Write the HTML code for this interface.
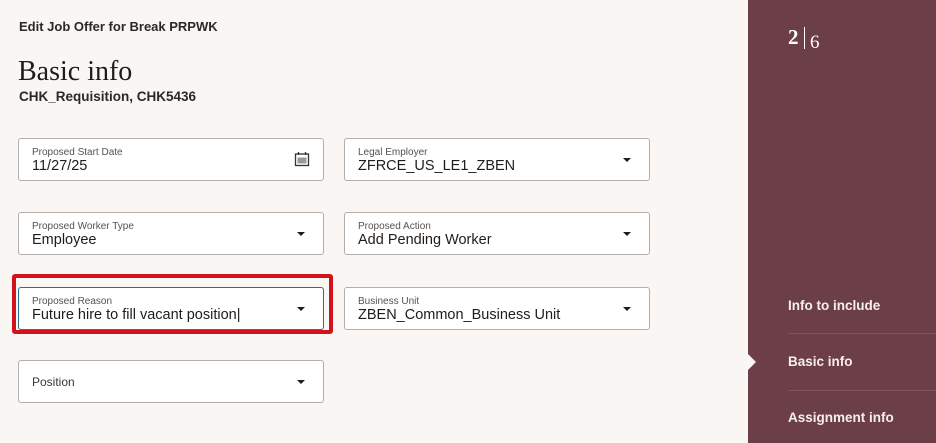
<!DOCTYPE html>
<html><head><meta charset="utf-8"><style>
*{margin:0;padding:0;box-sizing:border-box}
body{width:936px;height:443px;overflow:hidden;background:#f9f6f4;font-family:"Liberation Sans",sans-serif;position:relative;color:#1f1c1a}
.t1{position:absolute;left:19px;top:19px;font-size:13px;font-weight:bold;color:#2b2826}
.h{position:absolute;left:18px;top:56px;font-family:"Liberation Serif",serif;font-size:28px;color:#1f1c1a}
.sub{position:absolute;left:19px;top:89px;font-size:13.5px;font-weight:bold;color:#2b2826}
.f{position:absolute;width:306px;height:43px;background:#fff;border:1px solid #b3aeaa;border-radius:3px}
.f .l{position:absolute;left:13px;top:8px;font-size:10px;color:#58524e}
.f .v{position:absolute;left:13px;top:19px;font-size:14.5px;color:#1f1c1a}
.f .c{position:absolute;right:18px;top:19px;width:0;height:0;border-left:4.5px solid transparent;border-right:4.5px solid transparent;border-top:4.5px solid #1f1c1a}
.panel{position:absolute;left:748px;top:0;width:188px;height:443px;background:#6c3f48;color:#fff}
.n{position:absolute;font-family:"Liberation Serif",serif}
.ni{position:absolute;left:40px;font-size:13.5px;font-weight:bold;color:#f7eef0}
.sep{position:absolute;left:40px;right:0;height:1px;background:#7e535b}
</style></head><body>
<div class="t1">Edit Job Offer for Break PRPWK</div>
<div class="h">Basic info</div>
<div class="sub">CHK_Requisition, CHK5436</div>

<div class="f" style="left:18px;top:138px"><div class="l">Proposed Start Date</div><div class="v">11/27/25</div>
<svg style="position:absolute;right:13px;top:12px" width="16" height="16" viewBox="0 0 16 16"><rect x="1.5" y="3" width="13" height="11.5" fill="none" stroke="#333" stroke-width="1.3"/><line x1="4.5" y1="1" x2="4.5" y2="4" stroke="#333" stroke-width="1.3"/><line x1="11.5" y1="1" x2="11.5" y2="4" stroke="#333" stroke-width="1.3"/><rect x="3.5" y="6.5" width="9" height="6" fill="#999"/></svg></div>
<div class="f" style="left:344px;top:138px"><div class="l">Legal Employer</div><div class="v">ZFRCE_US_LE1_ZBEN</div><div class="c"></div></div>

<div class="f" style="left:18px;top:212px"><div class="l">Proposed Worker Type</div><div class="v">Employee</div><div class="c"></div></div>
<div class="f" style="left:344px;top:212px"><div class="l">Proposed Action</div><div class="v">Add Pending Worker</div><div class="c"></div></div>

<div class="f" style="left:18px;top:287px;border-color:#2c6d94"><div class="l">Proposed Reason</div><div class="v">Future hire to fill vacant position|</div><div class="c"></div></div>
<div class="f" style="left:344px;top:287px"><div class="l">Business Unit</div><div class="v">ZBEN_Common_Business Unit</div><div class="c"></div></div>
<div style="position:absolute;left:12px;top:274px;width:321px;height:60px;border:4px solid #d3131c;border-radius:3px"></div>

<div class="f" style="left:18px;top:360px"><div class="v" style="top:14px;font-size:12px;color:#3b3633">Position</div><div class="c"></div></div>

<div class="panel">
<div class="n" style="left:40px;top:25px;font-size:21px;font-weight:bold">2</div>
<div style="position:absolute;left:56px;top:27px;width:1px;height:22px;background:#fff"></div>
<div class="n" style="left:62px;top:32px;font-size:19px">6</div>
<div class="ni" style="top:298px">Info to include</div>
<div class="sep" style="top:333px"></div>
<div class="ni" style="top:354px">Basic info</div>
<div class="sep" style="top:390px"></div>
<div class="ni" style="top:410px">Assignment info</div>
<div style="position:absolute;left:0;top:354px;width:0;height:0;border-top:8px solid transparent;border-bottom:8px solid transparent;border-left:8px solid #f9f6f4"></div>
</div>
</body></html>
